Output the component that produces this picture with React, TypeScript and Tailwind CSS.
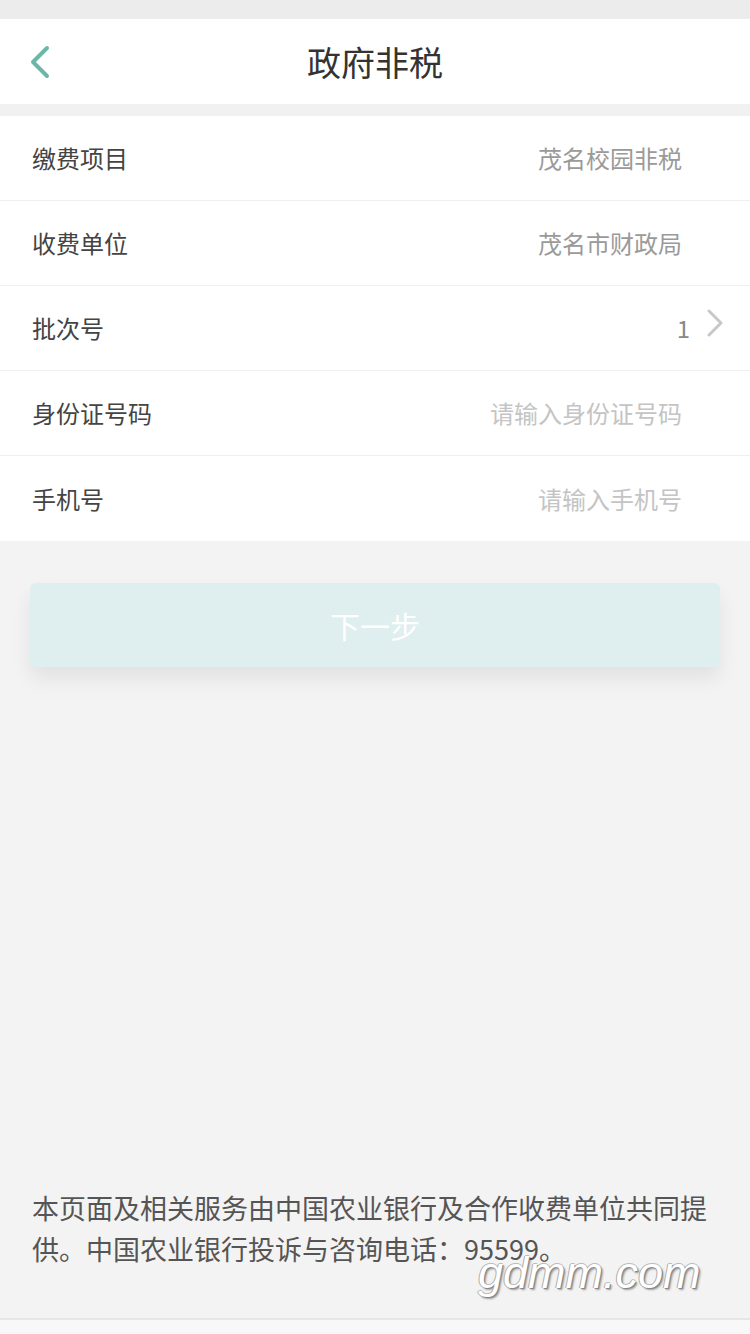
const rows = [
  { label: '缴费项目', value: '茂名校园非税', kind: 'value' },
  { label: '收费单位', value: '茂名市财政局', kind: 'value' },
  { label: '批次号', value: '1', kind: 'select' },
  { label: '身份证号码', value: '请输入身份证号码', kind: 'input' },
  { label: '手机号', value: '请输入手机号', kind: 'input' },
]

export default function App() {
  return (
    <div
      className="relative flex h-[1334px] w-[750px] flex-col overflow-hidden bg-[#f3f3f3]"
      style={{ fontFamily: '"Noto Sans CJK SC", "Noto Sans", sans-serif' }}
    >
      <div className="h-[19px] bg-[#ececec]" />

      {/* header */}
      <div className="relative flex h-[85px] items-center justify-center bg-white">
        <svg className="absolute left-[29px] top-[26px]" width="22" height="34" viewBox="0 0 22 34" fill="none">
          <polyline points="18,3 4,17 18,31" stroke="#6db7a8" strokeWidth="4" strokeLinecap="round" strokeLinejoin="round" />
        </svg>
        <h1 className="text-[34px] font-normal text-[#333]">政府非税</h1>
      </div>

      <div className="h-[12px] bg-[#f1f1f1]" />

      {/* form */}
      <div className="bg-white">
        {rows.map((row, i) => (
          <div
            key={row.label}
            className={`flex h-[85px] items-center justify-between pl-[32px] ${
              row.kind === 'select' ? 'pr-[26px]' : 'pr-[68px]'
            } ${i < rows.length - 1 ? 'border-b border-[#f0f0f0]' : ''}`}
          >
            <span className="text-[24px] text-[#444]">{row.label}</span>
            {row.kind === 'select' ? (
              <div className="flex items-center gap-[16px]">
                <span className="text-[24px] text-[#888]">{row.value}</span>
                <svg width="18" height="30" viewBox="0 0 18 30" fill="none" className="mt-[-8px]">
                  <polyline points="3,2 15,14 3,26" stroke="#c8c8c8" strokeWidth="3" strokeLinecap="round" strokeLinejoin="round" />
                </svg>
              </div>
            ) : (
              <span className={`text-[24px] ${row.kind === 'input' ? 'text-[#c4c4c4]' : 'text-[#9a9a9a]'}`}>
                {row.value}
              </span>
            )}
          </div>
        ))}
      </div>

      {/* button */}
      <div className="px-[30px] pt-[42px]">
        <button className="flex h-[84px] w-full items-center justify-center rounded-[6px] bg-[#dfeeee] text-[30px] text-white shadow-[0_12px_20px_rgba(0,0,0,0.07)]">
          下一步
        </button>
      </div>

      <div className="flex-1" />

      {/* footer note */}
      <p className="px-[32px] pb-[49px] text-[27px] leading-[41px] text-[#555]">
        本页面及相关服务由中国农业银行及合作收费单位共同提供。中国农业银行投诉与咨询电话：95599。
      </p>

      <div className="h-[16px] border-t-2 border-[#e6e6e6] bg-[#f8f8f8]" />

      {/* watermark */}
      <span
        className="absolute left-[478px] top-[1250px] text-[45px] italic leading-none text-white"
        style={{
          fontFamily: '"Liberation Sans", sans-serif',
          textShadow: '1px 1px 0 #888, -1px 0 0 #aaa, 0 -1px 0 #bbb, 2px 2px 2px rgba(0,0,0,0.35)',
        }}
      >
        gdmm.com
      </span>
    </div>
  )
}
